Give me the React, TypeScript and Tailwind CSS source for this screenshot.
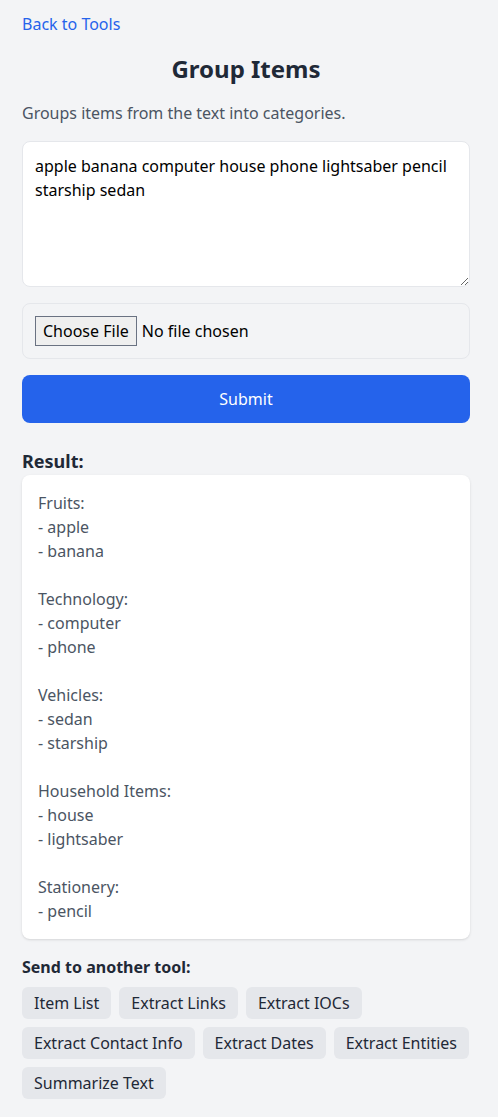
import { useState } from "react";

const tools = [
  "Item List",
  "Extract Links",
  "Extract IOCs",
  "Extract Contact Info",
  "Extract Dates",
  "Extract Entities",
  "Summarize Text",
];

const result = `Fruits:
- apple
- banana

Technology:
- computer
- phone

Vehicles:
- sedan
- starship

Household Items:
- house
- lightsaber

Stationery:
- pencil`;

const App = () => {
  const [text, setText] = useState(
    "apple banana computer house phone lightsaber pencil starship sedan"
  );

  return (
    <main className="min-h-screen bg-[#f3f4f6] font-['Noto_Sans',sans-serif]">
      <div className="ml-[22px] w-[448px] pt-3 pb-6">
        <a href="#" className="text-base text-[#2563eb]">
          Back to Tools
        </a>

        <h1 className="mt-[17px] text-center text-2xl font-bold text-[#1f2937]">
          Group Items
        </h1>

        <p className="mt-4 text-base text-[#4b5563]">
          Groups items from the text into categories.
        </p>

        {/* Input */}
        <textarea
          rows={5}
          value={text}
          onChange={(e) => setText(e.target.value)}
          className="mt-4 block w-full rounded-lg border border-gray-200 bg-white p-3 text-base text-black outline-none"
        />

        <div className="mt-4 rounded-lg border border-gray-200 p-3">
          <input
            type="file"
            className="block text-base text-black file:mr-[5px] file:border file:border-gray-500 file:bg-[#efefef] file:px-[7px] file:py-[2px] file:text-black"
          />
        </div>

        <button className="mt-4 h-12 w-full rounded-lg bg-[#2563eb] text-base text-white">
          Submit
        </button>

        {/* Result */}
        <h2 className="mt-6 text-lg font-bold text-[#1f2937]">Result:</h2>
        <pre className="rounded-lg bg-white p-4 font-['Noto_Sans',sans-serif] text-base whitespace-pre-wrap text-[#4b5563] shadow">
          {result}
        </pre>

        <h3 className="mt-4 text-base font-bold text-[#1f2937]">
          Send to another tool:
        </h3>
        <div className="mt-2 flex flex-wrap gap-2">
          {tools.map((t) => (
            <button
              key={t}
              className="rounded-md bg-[#e5e7eb] px-3 py-1 text-base text-[#1f2937]"
            >
              {t}
            </button>
          ))}
        </div>
      </div>
    </main>
  );
};

export default App;
